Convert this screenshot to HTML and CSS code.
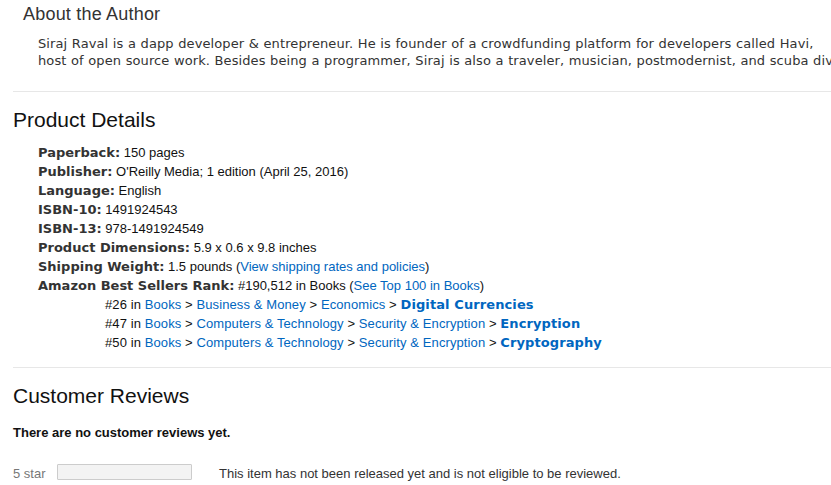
FILE: index.html
```html
<!DOCTYPE html>
<html lang="en">
<head>
    <meta charset="UTF-8">
    <meta name="viewport" content="width=device-width, initial-scale=1.0">
    <title>Product Details</title>
    <link rel="stylesheet" href="styles.css">
</head>
<body>
    <div class="page">
        <div class="author">
            <h3 class="author-title">About the Author</h3>
            <p class="author-bio">
                <span class="bio-line">Siraj Raval is a dapp developer &amp; entrepreneur. He is founder of a crowdfunding platform for developers called Havi,</span>
                <span class="bio-line">host of open source work. Besides being a programmer, Siraj is also a traveler, musician, postmodernist, and scuba diver.</span>
            </p>
        </div>

        <hr class="divider">

        <div class="details">
            <h2 class="section-title">Product Details</h2>
            <ul class="details-list">
                <li><b>Paperback:</b> 150 pages</li>
                <li><b>Publisher:</b> O'Reilly Media; 1 edition (April 25, 2016)</li>
                <li><b>Language:</b> English</li>
                <li><b>ISBN-10:</b> 1491924543</li>
                <li><b>ISBN-13:</b> 978-1491924549</li>
                <li><b>Product Dimensions:</b> 5.9 x 0.6 x 9.8 inches</li>
                <li><b>Shipping Weight:</b> 1.5 pounds (<a href="#">View shipping rates and policies</a>)</li>
                <li>
                    <b>Amazon Best Sellers Rank:</b> #190,512 in Books (<a href="#">See Top 100 in Books</a>)
                    <ul class="rank-list">
                        <li>#26 in <a href="#">Books</a> &gt; <a href="#">Business &amp; Money</a> &gt; <a href="#">Economics</a> &gt; <a href="#" class="rank-cat">Digital Currencies</a></li>
                        <li>#47 in <a href="#">Books</a> &gt; <a href="#">Computers &amp; Technology</a> &gt; <a href="#">Security &amp; Encryption</a> &gt; <a href="#" class="rank-cat">Encryption</a></li>
                        <li>#50 in <a href="#">Books</a> &gt; <a href="#">Computers &amp; Technology</a> &gt; <a href="#">Security &amp; Encryption</a> &gt; <a href="#" class="rank-cat">Cryptography</a></li>
                    </ul>
                </li>
            </ul>
        </div>

        <hr class="divider">

        <div class="reviews">
            <h2 class="section-title">Customer Reviews</h2>
            <div class="no-reviews">There are no customer reviews yet.</div>
            <div class="histogram-row">
                <span class="star-label">5 star</span>
                <span class="star-bar"></span>
                <span class="review-note">This item has not been released yet and is not eligible to be reviewed.</span>
            </div>
        </div>
    </div>
</body>
</html>
```

FILE: styles.css
```css
body {
    margin: 0;
    font-family: "Liberation Sans", Arial, sans-serif;
    font-size: 13px;
    color: #111;
    background-color: #fff;
    overflow: hidden;
}

a {
    color: #0066c0;
    text-decoration: none;
}

.page {
    padding-left: 13px;
}

.author {
    padding: 3px 0 0 10px;
}

.author-title {
    margin: 0;
    font-size: 18px;
    font-weight: normal;
    line-height: 22px;
    letter-spacing: 0.2px;
    color: #333;
}

.author-bio {
    margin: 10px 0 22px 15px;
    font-family: "DejaVu Sans", Verdana, sans-serif;
    font-size: 13px;
    line-height: 17px;
    letter-spacing: 0.1px;
    word-spacing: 0.3px;
    color: #333;
    white-space: nowrap;
}

.bio-line {
    display: block;
}

.divider {
    margin: 0;
    border: none;
    border-top: 1px solid #e7e7e7;
}

.section-title {
    margin: 16px 0 0 0;
    font-size: 21px;
    font-weight: normal;
    line-height: 24px;
    color: #111;
}

.details-list {
    margin: 11px 0 15px 0;
    padding-left: 25px;
    list-style: none;
    line-height: 19px;
    color: #111;
}

.details-list b {
    font-family: "DejaVu Sans", Verdana, sans-serif;
    color: #333;
}

.rank-list {
    margin: 0;
    padding-left: 67px;
    list-style: none;
    letter-spacing: 0.1px;
}

.rank-cat {
    font-family: "DejaVu Sans", Verdana, sans-serif;
    font-weight: bold;
}

.no-reviews {
    margin-top: 15px;
    font-weight: bold;
    line-height: 19px;
}

.histogram-row {
    display: flex;
    align-items: flex-start;
    margin-top: 22px;
    line-height: 19px;
}

.star-label {
    width: 44px;
    color: #777;
}

.star-bar {
    width: 133px;
    height: 14px;
    border: 1px solid #ccc;
    border-radius: 1px;
    background-color: #f3f3f3;
}

.review-note {
    margin-left: 27px;
    color: #333;
}
```
